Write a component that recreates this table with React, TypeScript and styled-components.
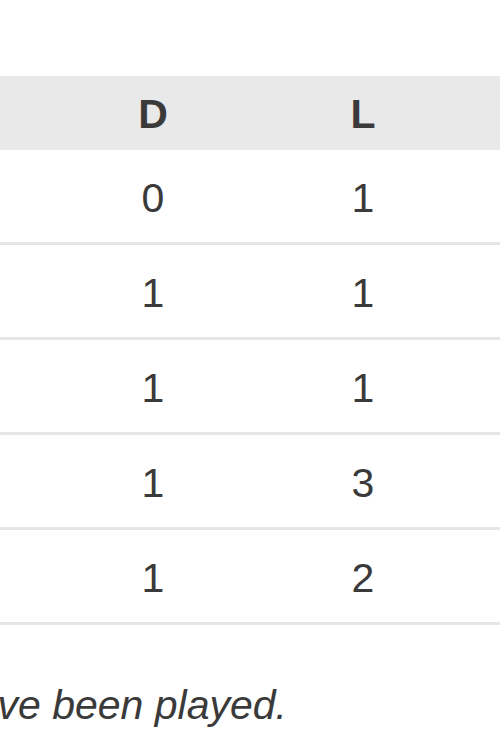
import React from "react";
import styled, { createGlobalStyle } from "styled-components";

const GlobalStyle = createGlobalStyle`
  html, body {
    margin: 0;
    padding: 0;
    background: #ffffff;
  }
  body {
    font-family: "Liberation Sans", Arial, sans-serif;
    color: #333333;
    overflow: hidden;
  }
`;

const Page = styled.div`
  width: 500px;
  height: 750px;
  padding-top: 76px;
  box-sizing: border-box;
  overflow: hidden;
`;

const Table = styled.div`
  display: grid;
  grid-template-columns: 48px 210px 210px 1fr;
`;

const HeadCell = styled.div`
  height: 74px;
  padding-top: 3px;
  box-sizing: border-box;
  background: #e9e9e9;
  display: flex;
  align-items: center;
  justify-content: center;
  font-size: 41px;
  font-weight: 700;
  color: #3a3a3a;
`;

const Cell = styled.div`
  height: 95px;
  padding-top: 4px;
  box-sizing: border-box;
  border-bottom: 3px solid #e6e6e6;
  display: flex;
  align-items: center;
  justify-content: center;
  font-size: 41px;
  color: #3a3a3a;
`;

const NoteRow = styled.div`
  width: 287px;
  margin-top: 57px;
  display: flex;
  justify-content: flex-end;
`;

const Note = styled.span`
  white-space: nowrap;
  font-size: 41px;
  font-style: italic;
  color: #3a3a3a;
`;

const rows = [
  { d: 0, l: 1 },
  { d: 1, l: 1 },
  { d: 1, l: 1 },
  { d: 1, l: 3 },
  { d: 1, l: 2 },
];

export default function App() {
  return (
    <>
      <GlobalStyle />
      <Page>
        <Table>
          <HeadCell />
          <HeadCell>D</HeadCell>
          <HeadCell>L</HeadCell>
          <HeadCell />
          {rows.map((r, i) => (
            <React.Fragment key={i}>
              <Cell />
              <Cell>{r.d}</Cell>
              <Cell>{r.l}</Cell>
              <Cell />
            </React.Fragment>
          ))}
        </Table>
        <NoteRow>
          <Note>Standings only count matches that have been played.</Note>
        </NoteRow>
      </Page>
    </>
  );
}
